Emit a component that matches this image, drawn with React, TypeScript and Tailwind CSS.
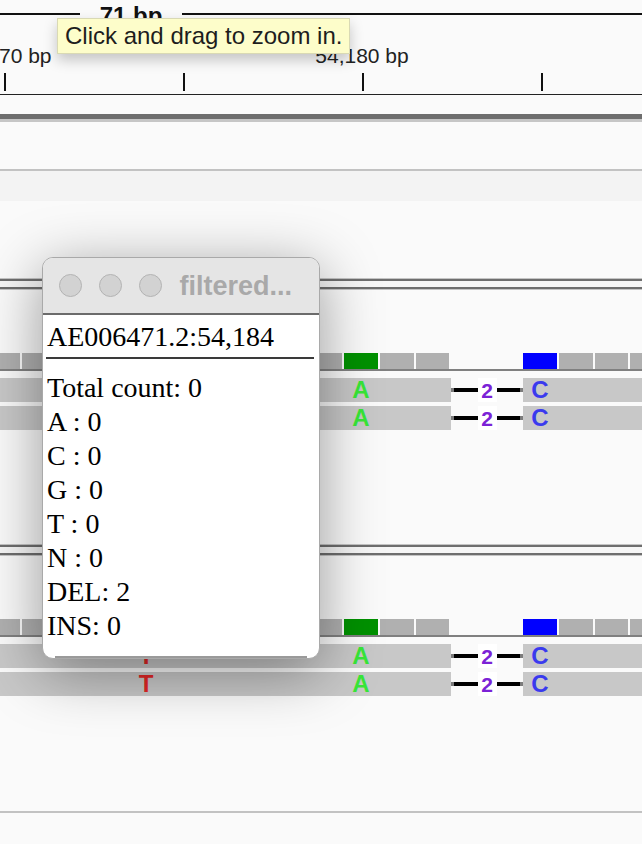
import React from "react";

const CELLS = Array.from({ length: 19 }, (_, i) => i);

function refClass(i: number): string {
  if (i === 10) return "bg-[#009100]";
  if (i === 15) return "bg-[#0000ff]";
  if (i === 13 || i === 14) return "";
  return "bg-[#b0b0b0]";
}

function RefRow() {
  return (
    <div className="h-[16px] flex ml-[-14px]">
      {CELLS.map((i) => (
        <div key={i} className="w-[35.8px] shrink-0 h-full">
          <div className={"w-[33.8px] h-full " + refClass(i)} />
        </div>
      ))}
    </div>
  );
}

function Letter({ i, showT }: { i: number; showT: boolean }) {
  let el: React.ReactNode = null;
  if (i === 4 && showT) el = <span className="text-[#e22626]">T</span>;
  if (i === 10) el = <span className="text-[#38e638]">A</span>;
  if (i === 15) el = <span className="text-[#3a3aee]">C</span>;
  return (
    <div className="w-[35.8px] shrink-0 h-full">
      <div className="w-[33.8px] h-full flex items-center justify-center text-[24px] leading-[24px] font-bold">
        {el}
      </div>
    </div>
  );
}

function ReadRow({ showT }: { showT: boolean }) {
  return (
    <div className="h-[24px] flex ml-[-14px]">
      <div className="flex bg-[#c8c8c8] h-full shrink-0">
        {CELLS.slice(0, 13).map((i) => (
          <Letter key={i} i={i} showT={showT} />
        ))}
      </div>
      <div className="w-[71.6px] h-full flex items-center shrink-0">
        <div className="w-[3px] h-[4px] bg-[#7c7c7c]" />
        <div className="flex-1 h-[4px] bg-black" />
        <div className="w-[19px] h-full bg-white flex items-center justify-center text-[21px] leading-none font-bold text-[#7b22d6]">
          2
        </div>
        <div className="flex-1 h-[4px] bg-black" />
        <div className="w-[3px] h-[4px] bg-[#7c7c7c]" />
      </div>
      <div className="flex bg-[#c8c8c8] h-full shrink-0">
        {CELLS.slice(15).map((i) => (
          <Letter key={i} i={i} showT={showT} />
        ))}
      </div>
    </div>
  );
}

function Track({ showT }: { showT: boolean }) {
  return (
    <div className="h-[266px] flex flex-col shrink-0">
      <div className="h-[1px] bg-[#c4c4c4]" />
      <div className="h-[2px] bg-[#6e6e6e]" />
      <div className="h-[6px] bg-[#f6f6f6]" />
      <div className="h-[2px] bg-[#6e6e6e]" />
      <div className="h-[1px] bg-[#c4c4c4]" />
      <div className="h-[63px]" />
      <RefRow />
      <div className="h-[2px] bg-[#808080]" />
      <div className="h-[7px]" />
      <ReadRow showT={showT} />
      <div className="h-[4px]" />
      <ReadRow showT={showT} />
    </div>
  );
}

function Ruler() {
  return (
    <div className="h-[95px] flex flex-col shrink-0 text-[#222]">
      <div className="h-[28px] flex items-start">
        <div className="w-[80px] h-[2px] mt-[13px] bg-[#111]" />
        <div className="w-[102px] mt-[4px] text-center font-bold text-[24px] leading-[24px] text-[#111]">
          71 bp
        </div>
        <div className="flex-1 h-[2px] mt-[13px] bg-[#111]" />
      </div>
      <div className="h-[24px] mt-[16px] flex text-[21px] leading-[24px]">
        <div className="w-[184px] shrink-0 whitespace-nowrap ml-[-1px]">70 bp</div>
        <div className="w-[358px] shrink-0 text-center whitespace-nowrap">54,180 bp</div>
      </div>
      <div className="h-[18px] mt-[5px] flex ml-[4px] gap-[177px]">
        <div className="w-[2px] h-full bg-[#111]" />
        <div className="w-[2px] h-full bg-[#111]" />
        <div className="w-[2px] h-full bg-[#111]" />
        <div className="w-[2px] h-full bg-[#111]" />
      </div>
      <div className="h-[1px] mt-[3px] bg-[#222]" />
    </div>
  );
}

function Popup() {
  const lines = [
    "Total count: 0",
    "A : 0",
    "C : 0",
    "G : 0",
    "T : 0",
    "N : 0",
    "DEL: 2",
    "INS: 0",
  ];
  return (
    <div className="absolute left-[42px] top-[257px] w-[278px] h-[402px] rounded-[11px] overflow-hidden border border-[#a9a9a9] bg-white flex flex-col shadow-[0_12px_60px_rgba(0,0,0,0.4)]">
      <div className="h-[55px] bg-[#e5e5e5] flex items-center pl-[15.5px] shrink-0">
        <div className="w-[23px] h-[23px] rounded-full bg-[#d2d2d2] border border-[#b3b3b3]" />
        <div className="w-[23px] h-[23px] rounded-full bg-[#d2d2d2] border border-[#b3b3b3] ml-[17px]" />
        <div className="w-[23px] h-[23px] rounded-full bg-[#d2d2d2] border border-[#b3b3b3] ml-[17px]" />
        <div className="ml-[18px] text-[27px] leading-[30px] font-bold text-[#a9a9a9] whitespace-nowrap">
          filtered...
        </div>
      </div>
      <div className="h-[2px] bg-[#6b6b6b] shrink-0" />
      <div
        className="flex-1 flex flex-col pt-[5px] pl-[4px] text-[28px] leading-[34px] text-black"
        style={{ fontFamily: '"Liberation Serif", "Times New Roman", serif' }}
      >
        <div className="whitespace-nowrap">AE006471.2:54,184</div>
        <div className="h-[2px] mt-[3px] ml-[-1px] mr-[5px] bg-[#3a3a3a]" />
        <div className="mt-[12px] flex flex-col">
          {lines.map((l) => (
            <div key={l} className="whitespace-nowrap">
              {l}
            </div>
          ))}
        </div>
      </div>
      <div className="h-[2px] bg-[#9a9a9a] mx-[12px] shrink-0" />
    </div>
  );
}

export default function App() {
  return (
    <div
      className="w-[642px] h-[844px] bg-[#fafafa] relative overflow-hidden flex flex-col"
      style={{ fontFamily: '"Liberation Sans", Arial, sans-serif' }}
    >
      <Ruler />
      <div className="h-[19px] shrink-0" />
      <div className="h-[5px] bg-[#6e6e6e] shrink-0" />
      <div className="h-[3px] bg-[#c6c6c6] shrink-0" />
      <div className="h-[47px] shrink-0" />
      <div className="h-[2px] bg-[#c2c2c2] shrink-0" />
      <div className="h-[30px] bg-[#f3f3f3] shrink-0" />
      <div className="h-[77px] shrink-0" />
      <Track showT={false} />
      <Track showT={true} />
      <div className="h-[1px] shrink-0" />
      <div className="h-[2px] bg-[#c2c2c2] shrink-0" />

      <Popup />

      <div className="absolute left-[57px] top-[18px] w-[293px] h-[36px] bg-[#fdfdca] border border-[#d9d9b4] flex items-center pl-[7px] text-[24px] leading-[36px] text-[#1d1d1d] whitespace-nowrap shadow-[0_6px_14px_rgba(0,0,0,0.22)]">
        Click and drag to zoom in.
      </div>
    </div>
  );
}
